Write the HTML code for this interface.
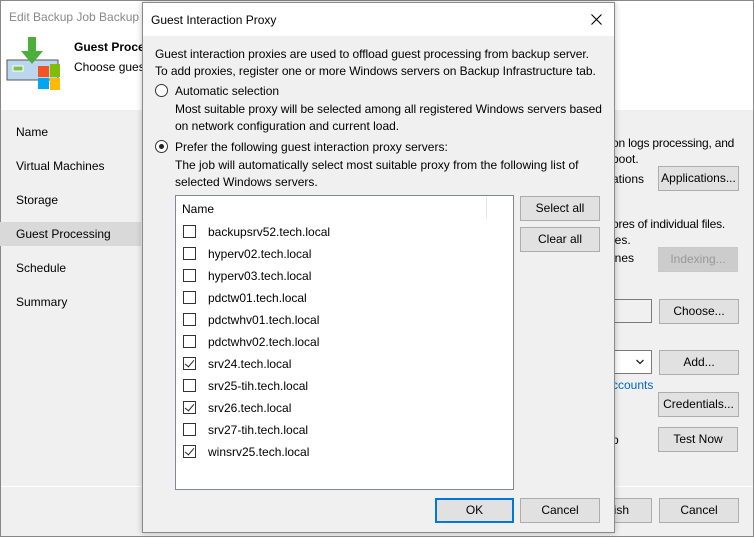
<!DOCTYPE html>
<html><head><style>
*{margin:0;padding:0;box-sizing:border-box}
body{width:754px;height:537px;position:relative;overflow:hidden;font-family:"Liberation Sans",sans-serif;font-size:12px;color:#000;background:#f0f0f0}
.a{position:absolute;white-space:nowrap}
.btn{position:absolute;background:#e1e1e1;border:1px solid #adadad;text-align:center;line-height:22px;font-size:12px}
.cb{position:absolute;width:13px;height:13px;border:1px solid #333;background:#fff}
.ck::after{content:"";position:absolute;left:3px;top:0px;width:4px;height:8px;border:solid #222;border-width:0 1.5px 1.5px 0;transform:rotate(40deg)}
</style></head><body>
<div class="a" style="left:0;top:0;width:754px;height:537px;border:1px solid #888"></div>
<div class="a" style="left:1px;top:1px;width:752px;height:109px;background:#fff"></div>
<div class="a" style="left:9px;top:10px;color:#888;font-size:12px">Edit Backup Job Backup J</div>
<svg class="a" style="left:6px;top:36px" width="54" height="54">
<rect x="1" y="24" width="51" height="20" fill="#bcd6ee" stroke="#555"/>
<rect x="7" y="30" width="10" height="5" fill="#7bc142" stroke="#fff"/>
<polygon points="22,1 30,1 30,15 37,15 26,28 15,15 22,15" fill="#4caf3b"/>
<rect x="32" y="30" width="11" height="11" fill="#f35325"/><rect x="44" y="28" width="12" height="13" fill="#81bc06"/>
<rect x="32" y="42" width="11" height="11" fill="#05a6f0"/><rect x="44" y="42" width="12" height="12" fill="#ffba08"/>
</svg>
<div class="a" style="left:74px;top:40px;font-weight:bold">Guest Proce</div>
<div class="a" style="left:74px;top:60px">Choose gues</div>
<div class="a" style="left:16px;top:125px">Name</div>
<div class="a" style="left:16px;top:159px">Virtual Machines</div>
<div class="a" style="left:16px;top:193px">Storage</div>
<div class="a" style="left:0;top:222px;width:141px;height:24px;background:#d9d9d9"></div>
<div class="a" style="left:16px;top:227px">Guest Processing</div>
<div class="a" style="left:16px;top:261px">Schedule</div>
<div class="a" style="left:16px;top:295px">Summary</div>
<div class="a" style="left:612px;top:136px;letter-spacing:-0.2px">on logs processing, and</div>
<div class="a" style="left:612px;top:152px">boot.</div>
<div class="a" style="left:612px;top:172px">ations</div>
<div class="btn" style="left:658px;top:166px;width:81px;height:25px">Applications...</div>
<div class="a" style="left:612px;top:217px;letter-spacing:-0.2px">ores of individual files.</div>
<div class="a" style="left:612px;top:233px">ies.</div>
<div class="a" style="left:612px;top:251px">ines</div>
<div class="btn" style="left:658px;top:247px;width:80px;height:25px;color:#999;border-color:#c8c8c8;background:#ccc">Indexing...</div>
<div class="a" style="left:600px;top:299px;width:52px;height:24px;background:#f0f0f0;border:1px solid #7a7a7a;border-left:none"></div>
<div class="btn" style="left:659px;top:299px;width:80px;height:25px">Choose...</div>
<div class="a" style="left:600px;top:350px;width:52px;height:24px;background:#fff;border:1px solid #7a7a7a;border-left:none"></div>
<svg class="a" style="left:636px;top:359px" width="8" height="6"><path d="M0.5 1L4 4.5L7.5 1" stroke="#222" fill="none" stroke-width="1.3"/></svg>
<div class="btn" style="left:659px;top:350px;width:80px;height:25px">Add...</div>
<div class="a" style="left:612px;top:378px;color:#0066cc">ccounts</div>
<div class="btn" style="left:658px;top:392px;width:81px;height:25px">Credentials...</div>
<div class="a" style="left:612px;top:433px">p</div>
<div class="btn" style="left:658px;top:427px;width:80px;height:25px">Test Now</div>
<div class="a" style="left:1px;top:486px;width:752px;height:1px;background:#fff"></div>
<div class="btn" style="left:580px;top:498px;width:72px;height:25px;text-align:right;padding-right:22px">ish</div>
<div class="btn" style="left:659px;top:498px;width:80px;height:25px">Cancel</div>

<div class="a" style="left:142px;top:2px;width:473px;height:531px;background:#f0f0f0;border:1px solid #8a8a8a;box-shadow:0 0 6px rgba(0,0,0,.25)"></div>
<div class="a" style="left:143px;top:3px;width:471px;height:33px;background:#fff"></div>
<div class="a" style="left:151px;top:13px">Guest Interaction Proxy</div>
<svg class="a" style="left:591px;top:14px" width="11" height="11"><path d="M0.5 0.5L10.5 10.5M10.5 0.5L0.5 10.5" stroke="#000" stroke-width="1.1"/></svg>
<div class="a" style="left:155px;top:47px;letter-spacing:-0.05px">Guest interaction proxies are used to offload guest processing from backup server.</div>
<div class="a" style="left:155px;top:64px;letter-spacing:-0.05px">To add proxies, register one or more Windows servers on Backup Infrastructure tab.</div>
<div class="a" style="left:155px;top:84px;width:13px;height:13px;border:1px solid #333;border-radius:50%;background:#fff"></div>
<div class="a" style="left:175px;top:84px">Automatic selection</div>
<div class="a" style="left:175px;top:102px;letter-spacing:-0.05px">Most suitable proxy will be selected among all registered Windows servers based</div>
<div class="a" style="left:175px;top:119px">on network configuration and current load.</div>
<div class="a" style="left:155px;top:140px;width:13px;height:13px;border:1px solid #333;border-radius:50%;background:#fff"><div style="position:absolute;left:3px;top:3px;width:5px;height:5px;border-radius:50%;background:#222"></div></div>
<div class="a" style="left:175px;top:140px">Prefer the following guest interaction proxy servers:</div>
<div class="a" style="left:175px;top:158px">The job will automatically select most suitable proxy from the following list of</div>
<div class="a" style="left:175px;top:175px">selected Windows servers.</div>
<div class="a" style="left:175px;top:195px;width:339px;height:295px;background:#fff;border:1px solid #828790"></div>
<div class="a" style="left:182px;top:202px">Name</div>
<div class="a" style="left:486px;top:197px;width:1px;height:22px;background:#e5e5e5"></div>
<div class="cb" style="left:183px;top:225px"></div><div class="a" style="left:208px;top:225px">backupsrv52.tech.local</div>
<div class="cb" style="left:183px;top:247px"></div><div class="a" style="left:208px;top:247px">hyperv02.tech.local</div>
<div class="cb" style="left:183px;top:269px"></div><div class="a" style="left:208px;top:269px">hyperv03.tech.local</div>
<div class="cb" style="left:183px;top:291px"></div><div class="a" style="left:208px;top:291px">pdctw01.tech.local</div>
<div class="cb" style="left:183px;top:313px"></div><div class="a" style="left:208px;top:313px">pdctwhv01.tech.local</div>
<div class="cb" style="left:183px;top:335px"></div><div class="a" style="left:208px;top:335px">pdctwhv02.tech.local</div>
<div class="cb ck" style="left:183px;top:357px"></div><div class="a" style="left:208px;top:357px">srv24.tech.local</div>
<div class="cb" style="left:183px;top:379px"></div><div class="a" style="left:208px;top:379px">srv25-tih.tech.local</div>
<div class="cb ck" style="left:183px;top:401px"></div><div class="a" style="left:208px;top:401px">srv26.tech.local</div>
<div class="cb" style="left:183px;top:423px"></div><div class="a" style="left:208px;top:423px">srv27-tih.tech.local</div>
<div class="cb ck" style="left:183px;top:445px"></div><div class="a" style="left:208px;top:445px">winsrv25.tech.local</div>
<div class="btn" style="left:520px;top:196px;width:80px;height:25px">Select all</div>
<div class="btn" style="left:520px;top:227px;width:80px;height:25px">Clear all</div>
<div class="btn" style="left:435px;top:498px;width:79px;height:25px;border:2px solid #0078d7;line-height:21px">OK</div>
<div class="btn" style="left:520px;top:498px;width:80px;height:25px">Cancel</div>
</body></html>
